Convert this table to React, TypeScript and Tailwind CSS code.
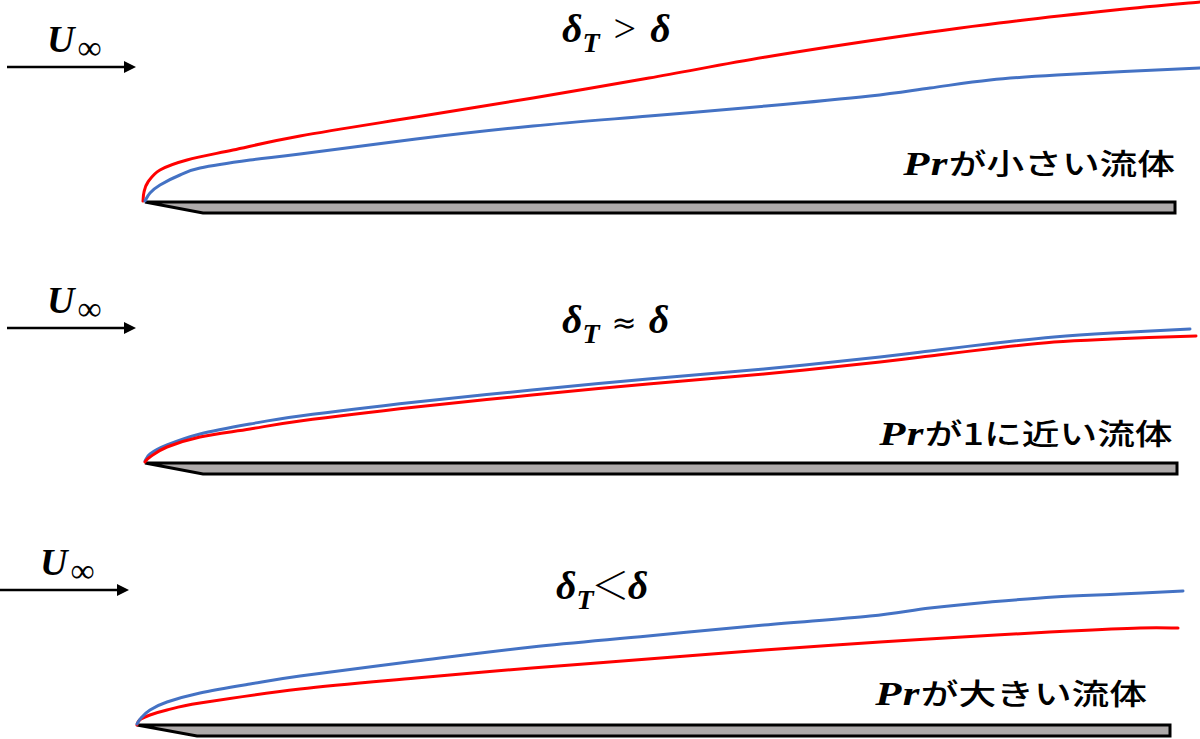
import type { ReactNode } from 'react'

type Pt = [number, number]

// catmull-rom through the sampled points -> cubic bezier path
function smooth(pts: Pt[]) {
  let d = `M${pts[0][0]},${pts[0][1]}`
  for (let i = 0; i < pts.length - 1; i++) {
    const p0 = pts[i - 1] ?? pts[i]
    const p1 = pts[i]
    const p2 = pts[i + 1]
    const p3 = pts[i + 2] ?? p2
    const c1x = p1[0] + (p2[0] - p0[0]) / 6
    const c1y = p1[1] + (p2[1] - p0[1]) / 6
    const c2x = p2[0] - (p3[0] - p1[0]) / 6
    const c2y = p2[1] - (p3[1] - p1[1]) / 6
    d += ` C${c1x.toFixed(1)},${c1y.toFixed(1)} ${c2x.toFixed(1)},${c2y.toFixed(1)} ${p2[0]},${p2[1]}`
  }
  return d
}

const RED = '#ff0000'
const BLUE = '#4472c4'

type Panel = {
  h: number
  arrow: [number, number] // x start, tip
  plate: [number, number, number] // left tip, bottom-left corner, right end
  red: Pt[]
  blue: Pt[]
  redOnTop?: boolean
}

const panels: Panel[] = [
  {
    h: 261,
    arrow: [7, 136],
    plate: [145, 203, 1175],
    red: [[143, 201], [144, 192], [148, 182], [160, 170], [187, 160], [233, 150], [300, 136], [416, 117], [533, 98], [649, 78], [766, 57], [882, 39], [999, 23], [1115, 10], [1200, 2]],
    blue: [[145, 201], [150, 193], [160, 185], [180, 175], [200, 168], [250, 160], [300, 154], [416, 139], [533, 126], [649, 116], [766, 106], [870, 96], [930, 88], [990, 80], [1057, 75], [1200, 68]],
  },
  {
    h: 262,
    arrow: [7, 136],
    plate: [145, 203, 1177],
    red: [[145, 201], [150, 196], [167, 186], [200, 176], [250, 168], [300, 160], [416, 146], [532, 134], [648, 123], [764, 113], [880, 101], [938, 94], [996, 87], [1054, 81], [1112, 78], [1196, 75]],
    blue: [[145, 200], [150, 193], [167, 184], [200, 173], [250, 163], [300, 155], [416, 141], [532, 129], [648, 118], [764, 108], [880, 96], [938, 89], [996, 82], [1054, 76], [1112, 72], [1190, 68]],
    redOnTop: true,
  },
  {
    h: 216,
    arrow: [0, 129],
    plate: [137, 197, 1170],
    red: [[137, 202], [138, 199], [141, 196], [150, 192], [167, 187], [200, 180], [300, 166], [416, 155], [532, 145], [648, 136], [764, 127], [880, 119], [996, 112], [1070, 108], [1140, 105], [1178, 105]],
    blue: [[137, 201], [141, 195], [150, 187], [167, 179], [200, 170], [250, 161], [300, 153], [416, 138], [532, 124], [648, 113], [764, 102], [870, 93], [930, 85], [990, 79], [1054, 74], [1120, 71], [1183, 68]],
  },
]

function Drawing({ p }: { p: Panel }) {
  const [l, bl, r] = p.plate
  const [ax, tip] = p.arrow
  const red = <path d={smooth(p.red)} fill="none" stroke={RED} strokeWidth="3" strokeLinecap="round" />
  const blue = <path d={smooth(p.blue)} fill="none" stroke={BLUE} strokeWidth="3" strokeLinecap="round" />
  return (
    <svg width="1200" height={p.h} viewBox={`0 0 1200 ${p.h}`} className="block">
      <line x1={ax} y1="67" x2={tip - 11} y2="67" stroke="#000" strokeWidth="2.5" />
      <polygon points={`${tip - 12},61 ${tip},67 ${tip - 12},73`} fill="#000" />
      <polygon points={`${l},202 ${r},202 ${r},213 ${bl},213`} fill="#aeaaaa" stroke="#000" strokeWidth="3" strokeLinejoin="miter" />
      {p.redOnTop ? (
        <>
          {blue}
          {red}
        </>
      ) : (
        <>
          {red}
          {blue}
        </>
      )}
    </svg>
  )
}

function Velocity({ className }: { className: string }) {
  return (
    <div className={`absolute flex items-baseline leading-none font-['Liberation_Serif',serif] ${className}`}>
      <span className="text-[38px] font-bold italic">U</span>
      <span className="relative top-[7px] ml-[3px] text-[34px]">∞</span>
    </div>
  )
}

function Formula({ op, className }: { op: ReactNode; className: string }) {
  return (
    <div className={`absolute flex items-baseline leading-none font-['Liberation_Serif',serif] text-[40px] ${className}`}>
      <span className="font-bold italic">δ</span>
      <span className="relative top-[10px] text-[28px] font-bold italic">T</span>
      {op}
      <span className="font-bold italic">δ</span>
    </div>
  )
}

function Label({ text, className }: { text: string; className: string }) {
  return (
    <div className={`absolute flex origin-right scale-x-[1.3] items-baseline leading-none ${className}`}>
      <span className="font-['Liberation_Serif',serif] text-[33px] font-bold italic tracking-[1px]">Pr</span>
      <span className="font-['Noto_Sans_CJK_JP',sans-serif] text-[29px] font-medium">{text}</span>
    </div>
  )
}

export default function App() {
  return (
    <div className="flex h-[739px] w-[1200px] flex-col overflow-hidden bg-white text-black">
      <div className="relative">
        <Drawing p={panels[0]} />
        <Velocity className="left-[47px] top-[20px]" />
        <Formula
          className="left-[562px] top-[9px]"
          op={<span className="mx-[14px] font-normal">&gt;</span>}
        />
        <Label text="が小さい流体" className="right-[25px] top-[148px]" />
      </div>
      <div className="relative">
        <Drawing p={panels[1]} />
        <Velocity className="left-[47px] top-[20px]" />
        <Formula
          className="left-[562px] top-[39px]"
          op={<span className="mx-[12px] font-['DejaVu_Sans',sans-serif] text-[30px]">≈</span>}
        />
        <Label text="が1に近い流体" className="right-[27px] top-[157px]" />
      </div>
      <div className="relative">
        <Drawing p={panels[2]} />
        <Velocity className="left-[40px] top-[20px]" />
        <Formula
          className="left-[556px] top-[41px]"
          op={<span className="-mx-[2px] font-['Noto_Sans_CJK_JP',sans-serif] text-[38px] font-light">＜</span>}
        />
        <Label text="が大きい流体" className="right-[53px] top-[155px]" />
      </div>
    </div>
  )
}
